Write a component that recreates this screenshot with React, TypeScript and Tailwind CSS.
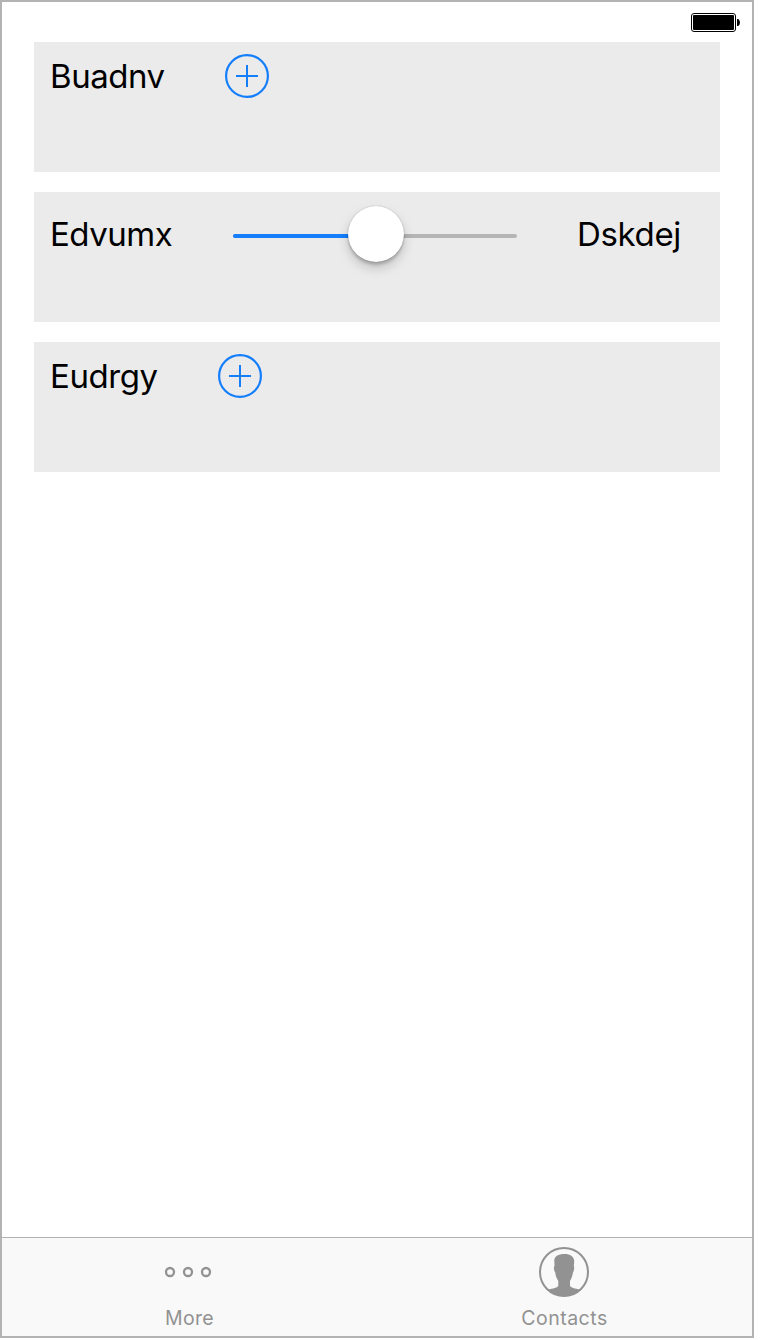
import React from "react";

function AddButton() {
  return (
    <button type="button" aria-label="Add" className="block size-11 shrink-0">
      <svg viewBox="0 0 44 44" className="block size-11" fill="none" stroke="#147efb" strokeWidth="2">
        <circle cx="22" cy="22" r="20.9" strokeWidth="2.2" />
        <path d="M11 22H33M22 11V33" />
      </svg>
    </button>
  );
}

function Battery() {
  return (
    <svg viewBox="0 0 50 20" className="block h-5 w-[50px]">
      <rect x="0.5" y="0.5" width="44" height="18" rx="2.5" fill="#fff" stroke="#000" />
      <rect x="2" y="2" width="41" height="15" rx="1" fill="#000" />
      <path d="M46 6H47C49.6 7 49.6 12 47 13H46Z" fill="#000" />
    </svg>
  );
}

function Slider() {
  return (
    <div className="relative h-14 w-[284px] shrink-0">
      <div className="flex h-1 translate-y-7 overflow-hidden rounded-full bg-[#b5b5b5]">
        <div className="w-1/2 bg-[#147efb]" />
      </div>
      <div className="absolute top-0 left-[115px] size-14 rounded-full bg-white shadow-[0_0_1px_rgba(0,0,0,0.35),0_6px_12px_rgba(0,0,0,0.18),0_3px_3px_rgba(0,0,0,0.18)]" />
    </div>
  );
}

function MoreIcon() {
  return (
    <svg viewBox="0 0 50 50" className="block size-[50px]" fill="none" stroke="#929292" strokeWidth="2.3">
      <circle cx="7" cy="25" r="4" />
      <circle cx="25" cy="25" r="4" />
      <circle cx="43" cy="25" r="4" />
    </svg>
  );
}

function ContactsIcon() {
  return (
    <svg viewBox="0 0 50 50" className="block size-[50px]">
      <circle cx="25" cy="25" r="24" fill="none" stroke="#929292" strokeWidth="2" />
      <path
        fill="#929292"
        d="M15.3 14C15.2 9.4 19 7 25.5 7C31.5 7 35.4 9.8 35.2 14.5L34.8 19C35.7 20 35 24 34 25.5C33.4 29 32.4 31.8 31 34V38.5C31.4 41 36 41.3 41.3 42.6C37.2 47 31.5 49.3 25 49.3S12.8 47 8.7 42.6C14 41.3 19 41 19.3 38.5V34C17.6 31.5 16.7 29 16.2 25.5C15 24 14.4 20 15.5 19Z"
      />
    </svg>
  );
}

export default function App() {
  return (
    <div className="min-h-[1340px] w-[760px] bg-white font-['Inter',sans-serif] text-black">
      <div className="flex h-[1338px] w-[754px] flex-col border-2 border-[#b3b3b3] bg-white">
        <header className="flex h-10 justify-end pt-[11px] pr-[11px]">
          <Battery />
        </header>
        <main className="flex grow flex-col gap-5 pr-8 pl-8 text-[33px] leading-10">
          <section className="flex h-[130px] items-start bg-[#ebebeb] pt-3 pl-4">
            <span className="mt-0.5 w-[175px] tracking-[-0.45px]">Buadnv</span>
            <AddButton />
          </section>
          <section className="flex h-[130px] items-start bg-[#ebebeb] pt-3.5 pl-4">
            <span className="mt-2 w-[183px] tracking-[-0.5px]">Edvumx</span>
            <Slider />
            <span className="mt-2 ml-[60px] tracking-[-0.35px]">Dskdej</span>
          </section>
          <section className="flex h-[130px] items-start bg-[#ebebeb] pt-3 pl-4">
            <span className="mt-0.5 w-[168px] tracking-[-0.45px]">Eudrgy</span>
            <AddButton />
          </section>
        </main>
        <nav className="grid h-[99px] grid-cols-2 border-t border-[#b2b2b2] bg-[#f9f9f9] pt-[9px] text-[19.5px] leading-6 text-[#929292]">
          <div className="flex flex-col items-center gap-[9px] pr-[3px]">
            <MoreIcon />
            <span className="pl-[3px] tracking-[0.3px]">More</span>
          </div>
          <div className="flex flex-col items-center gap-[9px] pr-[1px]">
            <ContactsIcon />
            <span className="pl-[1px] tracking-[0.5px]">Contacts</span>
          </div>
        </nav>
      </div>
    </div>
  );
}
